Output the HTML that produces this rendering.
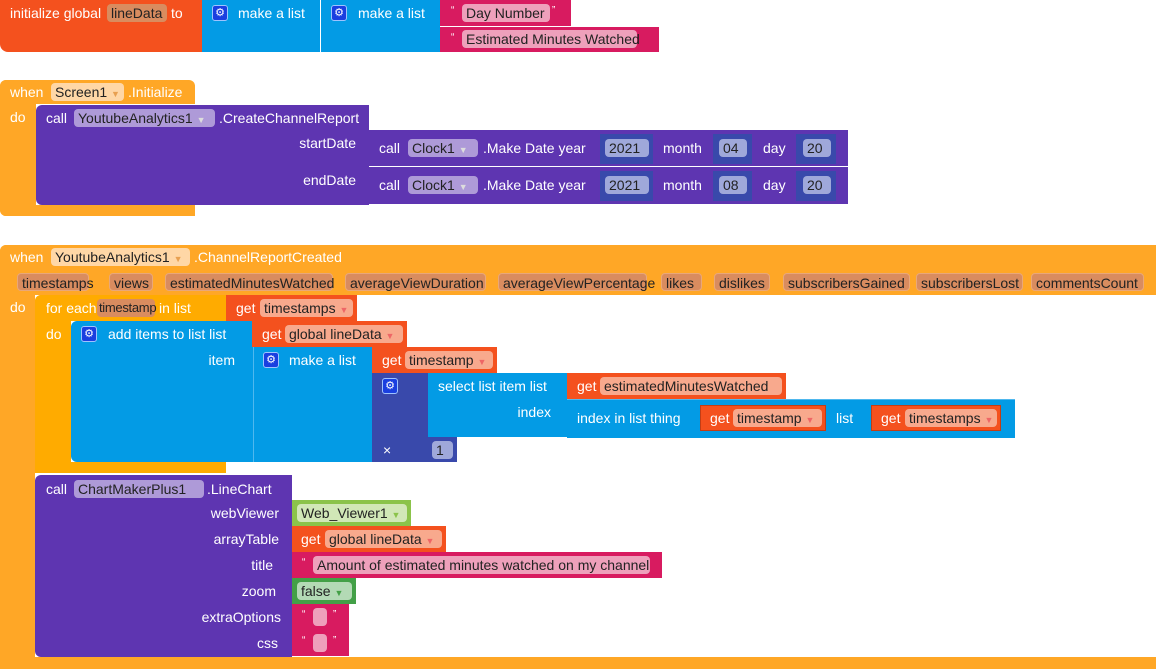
<!DOCTYPE html>
<html><head><meta charset="utf-8"><style>
body{margin:0;width:1156px;height:669px;background:#fff;position:relative;overflow:hidden;font-family:"Liberation Sans",sans-serif}
.b{position:absolute}
.t{position:absolute;color:#fff;font-size:14px;line-height:16px;white-space:nowrap}
.f{position:absolute;border-radius:4px;font-size:14px;line-height:18px;height:18px;color:#222;white-space:nowrap;padding-left:4px;box-sizing:border-box}
.r{text-align:right}
.g{position:absolute;width:16px;height:16px;background:#1a3fe0;border:1px solid #9fc3ff;border-radius:3px;box-sizing:border-box;color:#fff;font-size:11px;line-height:14px;text-align:center}
.o{background:#F4511E}.lb{background:#039BE5}.pk{background:#D81B60}.pu{background:#5E35B1}.y{background:#FFA726}.db{background:#3949AB}
.fo{background:#F8A98D}.fy{background:#FFD7A6}.fp{background:#AE9AD8}.fpk{background:#EEA0BB}.fpar{background:#D98C5F;border:1px solid #e9a779}.fdb{background:#9FA8DA}
</style></head><body>
<div class="b o" style="left:0;top:0;width:203px;height:52px;border-radius:0 0 0 8px"></div>
<div class="t" style="left:10px;top:5px">initialize global</div>
<div class="f" style="left:107px;top:4px;width:60px;background:#D98C5F">lineData</div>
<div class="t" style="left:171px;top:5px">to</div>
<div class="b lb" style="left:202px;top:0;width:118px;height:52px"></div>
<div class="g" style="left:212px;top:5px">⚙</div>
<div class="t" style="left:238px;top:5px">make a list</div>
<div class="b lb" style="left:321px;top:0;width:119px;height:52px"></div>
<div class="g" style="left:331px;top:5px">⚙</div>
<div class="t" style="left:358px;top:5px">make a list</div>
<div class="b pk" style="left:440px;top:0;width:131px;height:26px"></div>
<div class="t" style="left:451px;top:3px;font-size:10px">“</div>
<div class="f fpk" style="left:462px;top:4px;width:88px">Day Number</div>
<div class="t" style="left:552px;top:3px;font-size:10px">”</div>
<div class="b pk" style="left:440px;top:27px;width:219px;height:25px"></div>
<div class="t" style="left:451px;top:30px;font-size:10px">“</div>
<div class="f fpk" style="left:462px;top:30px;width:175px">Estimated Minutes Watched</div>

<div class="b y" style="left:0;top:80px;width:195px;height:24px;border-radius:6px 6px 0 0"></div>
<div class="b y" style="left:0;top:80px;width:36px;height:136px;border-radius:6px 0 0 6px"></div>
<div class="b y" style="left:0;top:205px;width:195px;height:11px;border-radius:0 0 0 6px"></div>
<div class="t" style="left:10px;top:84px">when</div>
<div class="f fy" style="left:51px;top:83px;width:73px">Screen1 <span style="color:#e8a050;font-size:9px">▼</span></div>
<div class="t" style="left:128px;top:84px">.Initialize</div>
<div class="t" style="left:10px;top:109px">do</div>
<div class="b pu" style="left:36px;top:105px;width:333px;height:100px;border-radius:6px 0 0 6px"></div>
<div class="t" style="left:46px;top:110px">call</div>
<div class="f fp" style="left:74px;top:109px;width:141px">YoutubeAnalytics1 <span style="font-size:9px;color:#ddd">▼</span></div>
<div class="t" style="left:219px;top:110px">.CreateChannelReport</div>
<div class="t r" style="left:260px;width:96px;top:135px">startDate</div>
<div class="t r" style="left:260px;width:96px;top:172px">endDate</div>
<div class="b pu" style="left:369px;top:130px;width:479px;height:36px"></div>
<div class="b pu" style="left:369px;top:167px;width:479px;height:37px"></div>
<div class="t" style="left:379px;top:140px">call</div>
<div class="f fp" style="left:408px;top:139px;width:70px">Clock1 <span style="font-size:9px;color:#ddd">▼</span></div>
<div class="t" style="left:483px;top:140px">.Make Date year</div>
<div class="b db" style="left:600px;top:134px;width:53px;height:30px"></div>
<div class="f fdb" style="left:605px;top:139px;width:44px">2021</div>
<div class="t" style="left:663px;top:140px">month</div>
<div class="b db" style="left:713px;top:134px;width:39px;height:30px"></div>
<div class="f fdb" style="left:719px;top:139px;width:28px">04</div>
<div class="t" style="left:763px;top:140px">day</div>
<div class="b db" style="left:796px;top:134px;width:40px;height:30px"></div>
<div class="f fdb" style="left:803px;top:139px;width:28px">20</div>
<div class="t" style="left:379px;top:177px">call</div>
<div class="f fp" style="left:408px;top:176px;width:70px">Clock1 <span style="font-size:9px;color:#ddd">▼</span></div>
<div class="t" style="left:483px;top:177px">.Make Date year</div>
<div class="b db" style="left:600px;top:171px;width:53px;height:30px"></div>
<div class="f fdb" style="left:605px;top:176px;width:44px">2021</div>
<div class="t" style="left:663px;top:177px">month</div>
<div class="b db" style="left:713px;top:171px;width:39px;height:30px"></div>
<div class="f fdb" style="left:719px;top:176px;width:28px">08</div>
<div class="t" style="left:763px;top:177px">day</div>
<div class="b db" style="left:796px;top:171px;width:40px;height:30px"></div>
<div class="f fdb" style="left:803px;top:176px;width:28px">20</div>

<div class="b y" style="left:0;top:245px;width:1156px;height:50px;border-radius:6px 0 0 0"></div>
<div class="b y" style="left:0;top:245px;width:35px;height:424px;border-radius:6px 0 0 6px"></div>
<div class="b y" style="left:0;top:657px;width:1156px;height:12px"></div>
<div class="t" style="left:10px;top:249px">when</div>
<div class="f fy" style="left:51px;top:248px;width:139px">YoutubeAnalytics1 <span style="color:#e8a050;font-size:9px">▼</span></div>
<div class="t" style="left:194px;top:249px">.ChannelReportCreated</div>
<div class="f fpar" style="left:17px;top:273px;width:72px">timestamps</div>
<div class="f fpar" style="left:109px;top:273px;width:44px">views</div>
<div class="f fpar" style="left:165px;top:273px;width:168px">estimatedMinutesWatched</div>
<div class="f fpar" style="left:345px;top:273px;width:141px">averageViewDuration</div>
<div class="f fpar" style="left:498px;top:273px;width:149px">averageViewPercentage</div>
<div class="f fpar" style="left:661px;top:273px;width:41px">likes</div>
<div class="f fpar" style="left:714px;top:273px;width:56px">dislikes</div>
<div class="f fpar" style="left:783px;top:273px;width:127px">subscribersGained</div>
<div class="f fpar" style="left:916px;top:273px;width:107px">subscribersLost</div>
<div class="f fpar" style="left:1031px;top:273px;width:113px">commentsCount</div>
<div class="t" style="left:10px;top:299px">do</div>

<div class="b" style="left:35px;top:295px;width:191px;height:26px;background:#FFAB00;border-radius:6px 0 0 0"></div>
<div class="b" style="left:35px;top:295px;width:36px;height:178px;background:#FFAB00;border-radius:6px 0 0 6px"></div>
<div class="b" style="left:35px;top:462px;width:191px;height:11px;background:#FFAB00"></div>
<div class="t" style="left:46px;top:300px">for each</div>
<div class="f" style="left:97px;top:299px;width:58px;background:#D98C5F;font-size:13px;letter-spacing:-0.3px;padding-left:2px">timestamp</div>
<div class="t" style="left:159px;top:300px">in list</div>
<div class="b o" style="left:226px;top:295px;width:131px;height:26px"></div>
<div class="t" style="left:236px;top:300px">get</div>
<div class="f fo" style="left:260px;top:299px;width:93px">timestamps <span style="font-size:9px;color:#e66">▼</span></div>
<div class="t" style="left:46px;top:326px">do</div>

<div class="b lb" style="left:71px;top:321px;width:182px;height:141px;border-radius:6px 0 0 6px"></div>
<div class="g" style="left:81px;top:326px">⚙</div>
<div class="t" style="left:108px;top:326px">add items to list  list</div>
<div class="t r" style="left:150px;width:85px;top:352px">item</div>
<div class="b o" style="left:252px;top:321px;width:155px;height:26px"></div>
<div class="t" style="left:262px;top:326px">get</div>
<div class="f fo" style="left:285px;top:325px;width:118px">global lineData <span style="font-size:9px;color:#e66">▼</span></div>
<div class="b lb" style="left:253px;top:347px;width:119px;height:115px;border-left:1px solid #4fb8ee"></div>
<div class="g" style="left:263px;top:352px">⚙</div>
<div class="t" style="left:289px;top:352px">make a list</div>
<div class="b o" style="left:372px;top:347px;width:125px;height:26px"></div>
<div class="t" style="left:382px;top:352px">get</div>
<div class="f fo" style="left:405px;top:351px;width:88px">timestamp <span style="font-size:9px;color:#e66">▼</span></div>
<div class="b db" style="left:372px;top:373px;width:56px;height:89px"></div>
<div class="b db" style="left:420px;top:437px;width:37px;height:25px"></div>
<div class="g" style="left:382px;top:378px">⚙</div>
<div class="t" style="left:383px;top:442px">×</div>
<div class="f fdb" style="left:432px;top:441px;width:21px">1</div>
<div class="b lb" style="left:428px;top:373px;width:139px;height:64px"></div>
<div class="t" style="left:438px;top:378px">select list item  list</div>
<div class="t r" style="left:480px;width:71px;top:404px">index</div>
<div class="b o" style="left:567px;top:373px;width:219px;height:26px"></div>
<div class="t" style="left:577px;top:378px">get</div>
<div class="f fo" style="left:600px;top:377px;width:182px">estimatedMinutesWatched</div>
<div class="b lb" style="left:567px;top:399px;width:448px;height:38px;border-top:1px solid #4fb8ee"></div>
<div class="t" style="left:577px;top:410px">index in list  thing</div>
<div class="b o" style="left:700px;top:405px;width:126px;height:26px;border:1px solid #c33d14;box-sizing:border-box"></div>
<div class="t" style="left:710px;top:410px">get</div>
<div class="f fo" style="left:733px;top:409px;width:89px">timestamp <span style="font-size:9px;color:#e66">▼</span></div>
<div class="t" style="left:836px;top:410px">list</div>
<div class="b o" style="left:871px;top:405px;width:130px;height:26px;border:1px solid #c33d14;box-sizing:border-box"></div>
<div class="t" style="left:881px;top:410px">get</div>
<div class="f fo" style="left:905px;top:409px;width:92px">timestamps <span style="font-size:9px;color:#e66">▼</span></div>

<div class="b pu" style="left:35px;top:475px;width:257px;height:182px;border-radius:6px 0 0 6px"></div>
<div class="t" style="left:46px;top:481px">call</div>
<div class="f fp" style="left:74px;top:480px;width:130px">ChartMakerPlus1</div>
<div class="t" style="left:207px;top:481px">.LineChart</div>
<div class="t r" style="left:150px;width:129px;top:505px">webViewer</div>
<div class="t r" style="left:150px;width:129px;top:531px">arrayTable</div>
<div class="t r" style="left:150px;width:123px;top:557px">title</div>
<div class="t r" style="left:150px;width:126px;top:583px">zoom</div>
<div class="t r" style="left:150px;width:131px;top:609px">extraOptions</div>
<div class="t r" style="left:150px;width:128px;top:635px">css</div>
<div class="b" style="left:292px;top:500px;width:119px;height:26px;background:#8BC34A"></div>
<div class="f" style="left:297px;top:504px;width:110px;background:#D1E7B7">Web_Viewer1 <span style="font-size:9px;color:#8bc34a">▼</span></div>
<div class="b o" style="left:292px;top:526px;width:154px;height:26px"></div>
<div class="t" style="left:301px;top:531px">get</div>
<div class="f fo" style="left:325px;top:530px;width:117px">global lineData <span style="font-size:9px;color:#e66">▼</span></div>
<div class="b pk" style="left:292px;top:552px;width:370px;height:26px"></div>
<div class="t" style="left:302px;top:555px;font-size:10px">“</div>
<div class="f fpk" style="left:313px;top:556px;width:337px">Amount of estimated minutes watched on my channel</div>
<div class="b" style="left:292px;top:578px;width:64px;height:26px;background:#43A047"></div>
<div class="f" style="left:297px;top:582px;width:55px;background:#B3DAB5">false <span style="font-size:9px;color:#43a047">▼</span></div>
<div class="b pk" style="left:292px;top:604px;width:57px;height:26px"></div>
<div class="t" style="left:302px;top:607px;font-size:10px">“</div>
<div class="f fpk" style="left:313px;top:608px;width:14px"></div>
<div class="t" style="left:333px;top:607px;font-size:10px">”</div>
<div class="b pk" style="left:292px;top:630px;width:57px;height:26px"></div>
<div class="t" style="left:302px;top:633px;font-size:10px">“</div>
<div class="f fpk" style="left:313px;top:634px;width:14px"></div>
<div class="t" style="left:333px;top:633px;font-size:10px">”</div>
</body></html>
